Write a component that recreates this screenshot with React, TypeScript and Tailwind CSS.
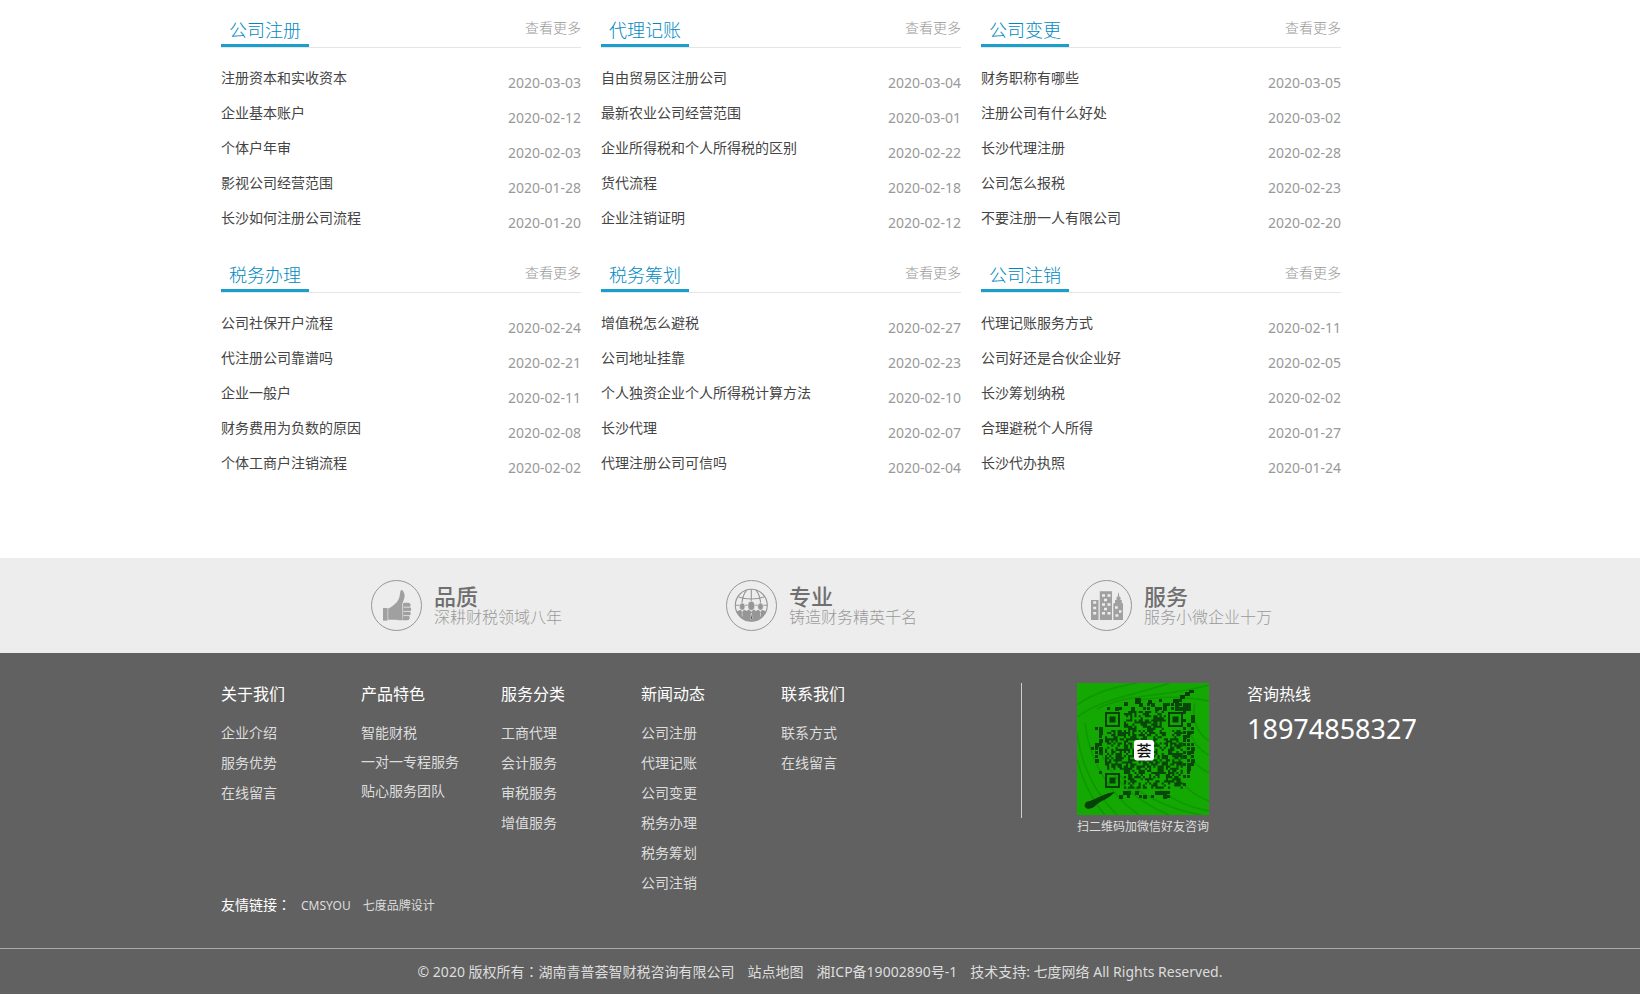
import type { ReactNode } from 'react';

interface NewsItem {
  title: string;
  date: string;
}

interface NewsGroup {
  name: string;
  items: NewsItem[];
}

interface LinkGroup {
  name: string;
  links: string[];
  tight?: boolean;
}

const NEWS: NewsGroup[] = [
  {
    name: '公司注册',
    items: [
      { title: '注册资本和实收资本', date: '2020-03-03' },
      { title: '企业基本账户', date: '2020-02-12' },
      { title: '个体户年审', date: '2020-02-03' },
      { title: '影视公司经营范围', date: '2020-01-28' },
      { title: '长沙如何注册公司流程', date: '2020-01-20' },
    ],
  },
  {
    name: '代理记账',
    items: [
      { title: '自由贸易区注册公司', date: '2020-03-04' },
      { title: '最新农业公司经营范围', date: '2020-03-01' },
      { title: '企业所得税和个人所得税的区别', date: '2020-02-22' },
      { title: '货代流程', date: '2020-02-18' },
      { title: '企业注销证明', date: '2020-02-12' },
    ],
  },
  {
    name: '公司变更',
    items: [
      { title: '财务职称有哪些', date: '2020-03-05' },
      { title: '注册公司有什么好处', date: '2020-03-02' },
      { title: '长沙代理注册', date: '2020-02-28' },
      { title: '公司怎么报税', date: '2020-02-23' },
      { title: '不要注册一人有限公司', date: '2020-02-20' },
    ],
  },
  {
    name: '税务办理',
    items: [
      { title: '公司社保开户流程', date: '2020-02-24' },
      { title: '代注册公司靠谱吗', date: '2020-02-21' },
      { title: '企业一般户', date: '2020-02-11' },
      { title: '财务费用为负数的原因', date: '2020-02-08' },
      { title: '个体工商户注销流程', date: '2020-02-02' },
    ],
  },
  {
    name: '税务筹划',
    items: [
      { title: '增值税怎么避税', date: '2020-02-27' },
      { title: '公司地址挂靠', date: '2020-02-23' },
      { title: '个人独资企业个人所得税计算方法', date: '2020-02-10' },
      { title: '长沙代理', date: '2020-02-07' },
      { title: '代理注册公司可信吗', date: '2020-02-04' },
    ],
  },
  {
    name: '公司注销',
    items: [
      { title: '代理记账服务方式', date: '2020-02-11' },
      { title: '公司好还是合伙企业好', date: '2020-02-05' },
      { title: '长沙筹划纳税', date: '2020-02-02' },
      { title: '合理避税个人所得', date: '2020-01-27' },
      { title: '长沙代办执照', date: '2020-01-24' },
    ],
  },
];

const FOOTER_LINKS: LinkGroup[] = [
  { name: '关于我们', links: ['企业介绍', '服务优势', '在线留言'] },
  { name: '产品特色', links: ['智能财税', '一对一专程服务', '贴心服务团队'], tight: true },
  { name: '服务分类', links: ['工商代理', '会计服务', '审税服务', '增值服务'] },
  {
    name: '新闻动态',
    links: ['公司注册', '代理记账', '公司变更', '税务办理', '税务筹划', '公司注销'],
  },
  { name: '联系我们', links: ['联系方式', '在线留言'] },
];

function NewsBlock({ group }: { group: NewsGroup }) {
  return (
    <section>
      <header className="flex h-[45px] items-end justify-between border-b border-[#e5e5e5]">
        <h2 className="h-8 border-b-[3px] border-[#1a9fcc] px-2 text-lg leading-[30px] font-light text-[#0089c0]">
          {group.name}
        </h2>
        <a href="#" className="pb-2 text-sm leading-[22px] font-light text-[#999]">
          查看更多
        </a>
      </header>
      <ul className="mt-3">
        {group.items.map((item) => (
          <li key={item.title} className="flex h-[35px] items-start justify-between text-sm">
            <a href="#" className="leading-[35px] text-[#444]">
              {item.title}
            </a>
            <time className="pt-[5px] leading-[35px] text-[#999]">{item.date}</time>
          </li>
        ))}
      </ul>
    </section>
  );
}

function ThumbIcon() {
  return (
    <g fill="#a0a0a0">
      <path d="M12 28h4.6v12.6H12z" />
      <path d="M17.2 28.6c3.6-1.4 8.6-5.6 10.4-9.4 1.4-3 1.3-6 2-8.4.4-1.2 1.8-.8 2.6.4 1.7 2.5 1.8 5.6.6 8.6l-1.4 3.6V40c-1.4.5-3 .3-4.6.1-3.2-.4-6.2-.3-9.6-.3z" />
      <path d="M32 23.3c2.4-.7 5-.6 6.6-.1 1.4.5 1.4 2.9.1 3.5-1.7.7-4.5.6-6.3.2 2.4.3 4.9.4 6.6.3 1.7.3 1.7 3.5 0 4-1.5.4-4.9.4-6.9 0 2.3.4 4.9.5 6.5.3 1.6.4 1.5 3.5-.1 3.9-1.5.4-4.3.4-6.3.1 2.1.3 4.3.4 5.5.3 1.5.4 1.2 3.8-.2 4.2-1.8.4-4.5.4-6.5 0z" />
      <path d="M32.5 27.2h6M32.3 31.4h7M32.4 35.6h6" stroke="#ededed" strokeWidth=".8" fill="none" />
      <path d="M31.6 24v15.5" stroke="#ededed" strokeWidth=".4" />
    </g>
  );
}

function GlobeIcon() {
  return (
    <g>
      <g fill="none" stroke="#969696" strokeWidth="1.1">
        <circle cx="25.3" cy="25.3" r="16" />
        <path d="M25.3 9.3v16M9.3 25.3h32M12.5 17c7.5 2.6 18 2.6 25.6 0M20.5 10.2c-3 4-4.5 9-4.6 15M30.1 10.2c3 4 4.5 9 4.6 15" />
      </g>
      <path
        d="M10.5 31.5l4-1.8 1.7 2.3 1.7-2.3 3 1.3 2.3-2 2.1 3 2.1-3 2.3 2 3-1.3 1.7 2.3 1.7-2.3 4 1.8c-2.3 6-8 9.8-14.8 9.8s-12.5-3.8-14.8-9.8z"
        fill="#969696"
      />
      <g fill="#969696" stroke="#ededed" strokeWidth=".7">
        <ellipse cx="16.2" cy="26.6" rx="2.9" ry="3.7" />
        <ellipse cx="34.5" cy="26.6" rx="2.9" ry="3.7" />
        <ellipse cx="25.3" cy="25.8" rx="3.5" ry="4.6" />
      </g>
      <path d="M25.3 33l-.9 6h1.8zM16.2 32.5v4M34.5 32.5v4" stroke="#ededed" strokeWidth=".6" />
    </g>
  );
}

function BuildingIcon() {
  return (
    <g>
      <path
        d="M10 20h7.5v20H10zM18.8 11.2h12.2V40H18.8zM32.3 40V23.3h1.7V20h1.5v-3h1l1-5 1 5h1v3h1.3v3.3H42V40z"
        fill="#a0a0a0"
      />
      <path
        d="M12.2 22.5h3M12.2 28h3M12.2 33.3h3M21 15.5h3M26.5 15.5h3M23 20h3M21 24.5h3M26.5 24.5h3M23 29h3M21 33.3h3M26.5 33.3h3M34 27.5h2.8M38 31.5h2.5M34.5 35.5h2.8"
        stroke="#ededed"
        strokeWidth="2.4"
      />
    </g>
  );
}

function Feature({ title, text, icon }: { title: string; text: string; icon: ReactNode }) {
  return (
    <div className="flex items-center justify-center gap-3">
      <svg className="size-[51px]" viewBox="0 0 51 51" aria-hidden="true">
        <circle cx="25.5" cy="25.5" r="25" fill="none" stroke="#969696" />
        {icon}
      </svg>
      <div>
        <h3 className="text-[22px] leading-[22px] font-medium text-[#707070]">{title}</h3>
        <p className="text-base leading-5 font-light text-[#999]">{text}</p>
      </div>
    </div>
  );
}

const CELL = 2.1;
const ORIGIN = 28;
const FINDERS = [
  [28, 29],
  [91, 29],
  [28, 90],
];

// Modules fill the code's square, with looser ones around it in a leaf outline
function buildModules() {
  const cells: string[] = [];
  let seed = 20200305;
  const random = () => {
    seed = (seed * 1103515245 + 12345) % 2147483648;
    return seed / 2147483648;
  };
  const add = (x: number, y: number, size: number) =>
    cells.push(`M${x.toFixed(1)} ${y.toFixed(1)}h${size}v${size}h-${size}z`);

  for (let row = 0; row < 37; row++) {
    for (let col = 0; col < 37; col++) {
      const r = random();
      const x = ORIGIN + col * CELL;
      const y = ORIGIN + row * CELL;
      if (FINDERS.some(([fx, fy]) => x > fx - 4 && x < fx + 17 && y > fy - 4 && y < fy + 17)) continue;
      if (r < 0.56) add(x, y, CELL);
    }
  }

  for (let y = 12; y < 116; y += 4) {
    for (let x = 14; x < 118; x += 4) {
      const r = random();
      if (x > 24 && x < 106 && y > 24 && y < 106) continue;
      const left = x < 28 && y > 34 && y < 100 && x > 12 + Math.abs(y - 62) * 0.3;
      const right = x >= 104 && y > 20 && y < 102 && x < 118 - Math.abs(y - 56) * 0.16;
      const top = y < 28 && x > 26 && x < 112 && y > 24 - (x - 26) * 0.15;
      const bottom = y >= 104 && x > 36 && x < 96 && y < 114;
      if ((left || right || top || bottom) && r < 0.55) add(x, y, r < 0.25 ? 4 : 3);
    }
  }
  return cells.join('');
}

const MODULES = buildModules();

function QrCode() {
  return (
    <svg className="size-[132px]" viewBox="0 0 132 132" role="img" aria-label="微信二维码">
      <rect width="132" height="132" fill="#14a803" />
      <g fill="none" stroke="#0e8c02" strokeWidth="1.5" opacity=".6">
        <path d="M0 22C20 8 38 4 60 0M0 34C28 14 60 12 92 0M20 26C50 10 90 14 132 2M60 18c26-6 50-4 72 0" />
        <path d="M0 50c4 30 16 58 40 82M0 76c6 22 14 40 28 56M8 40c4 34 22 70 54 92M20 60c10 30 34 56 72 72M40 90c20 20 50 36 84 42" />
        <path d="M118 20c-4 16 2 30 14 38M112 40c0 14 8 26 20 32M108 60c2 14 12 24 24 30M96 86c8 16 20 26 36 32M76 100c14 14 34 24 56 28" />
      </g>
      <path d={MODULES} fill="#07480a" />
      <g fill="#07400a">
        <path d="M38 109c-10 1-15 5-25 9-4 0-6 3-5 6 2 3 7 2 10-1 6-6 14-7 20-14z" />
        <path d="M103 12h5v-3h4V7h5v3h-4v3h-5v3h-5zM96 16h5v4h-5zM58 15h6v6h-6zM47 19h4v4h-4zM71 17h4v4h-4z" />
      </g>
      {FINDERS.map(([x, y]) => (
        <g key={`${x}-${y}`}>
          <rect x={x + 1} y={y + 1} width="13" height="13" fill="none" stroke="#07400a" strokeWidth="2" />
          <rect x={x + 4.5} y={y + 4.5} width="6" height="6" fill="#07400a" />
        </g>
      ))}
      <rect x="57" y="57" width="20" height="20.5" rx="3" fill="#fff" />
      <text x="67" y="73" textAnchor="middle" fontSize="15" fontWeight="500" fill="#111">
        荟
      </text>
    </svg>
  );
}

function Footer() {
  return (
    <footer className="bg-[#616161] text-[#ddd]">
      <div className="mx-auto max-w-[1198px] pt-[30px]">
        <div className="flex h-[209px]">
          <nav className="grid grid-cols-[repeat(5,140px)]">
            {FOOTER_LINKS.map((group) => (
              <div key={group.name}>
                <h3 className="mb-[13px] text-base leading-[22px] text-white">{group.name}</h3>
                <ul className={group.tight ? 'text-sm leading-[29px]' : 'text-sm leading-[30px]'}>
                  {group.links.map((link) => (
                    <li key={link}>
                      <a href="#">{link}</a>
                    </li>
                  ))}
                </ul>
              </div>
            ))}
          </nav>
          <div className="ml-[100px] flex items-start">
            <div className="h-[135px] w-px bg-[#ccc]" />
            <figure className="ml-[55px]">
              <QrCode />
              <figcaption className="text-xs leading-6 whitespace-nowrap">扫二维码加微信好友咨询</figcaption>
            </figure>
            <div className="ml-[38px] text-white">
              <h3 className="text-base leading-[22px]">咨询热线</h3>
              <p className="text-[27px] leading-[48px]">18974858327</p>
            </div>
          </div>
        </div>
        <div className="flex h-6 items-baseline text-xs leading-6">
          <span className="w-20 text-sm leading-6 text-white">
            友情链接<span className="font-['Noto_Sans_CJK_TC',sans-serif]">：</span>
          </span>
          <div className="flex gap-3">
            <a href="#">CMSYOU</a>
            <a href="#">七度品牌设计</a>
          </div>
        </div>
      </div>
      <div className="mt-8 border-t border-[#aaa] pt-[11px] pb-[10px]">
        <div className="flex min-h-6 flex-wrap items-baseline justify-center gap-x-[13px] text-sm leading-[22px]">
          <span>
            © 2020 版权所有<span className="font-['Noto_Sans_CJK_TC',sans-serif]">：</span>湖南青普荟智财税咨询有限公司
          </span>
          <a href="#">站点地图</a>
          <a href="#">湘ICP备19002890号-1</a>
          <span>
            技术支持: <a href="#">七度网络</a> All Rights Reserved.
          </span>
        </div>
      </div>
    </footer>
  );
}

export default function App() {
  return (
    <div className="bg-white font-['Noto_Sans','Noto_Sans_CJK_SC',sans-serif]">
      <main className="mx-auto max-w-[1198px] pt-[3px] pb-[78px]">
        <div className="grid max-w-[1120px] grid-cols-3 gap-x-5 gap-y-[13px]">
          {NEWS.map((group) => (
            <NewsBlock key={group.name} group={group} />
          ))}
        </div>
      </main>
      <div className="bg-[#ededed] py-[22px]">
        <div className="mx-auto grid max-w-[1068px] grid-cols-3 pl-[3px]">
          <Feature title="品质" text="深耕财税领域八年" icon={<ThumbIcon />} />
          <Feature title="专业" text="铸造财务精英千名" icon={<GlobeIcon />} />
          <Feature title="服务" text="服务小微企业十万" icon={<BuildingIcon />} />
        </div>
      </div>
      <Footer />
    </div>
  );
}
